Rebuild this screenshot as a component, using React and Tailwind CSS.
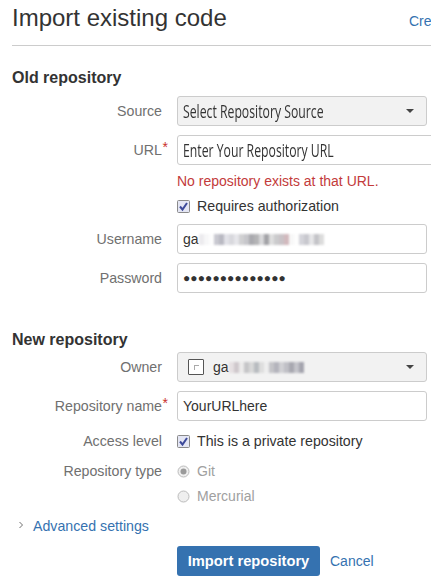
const labelCls = "w-[150px] shrink-0 text-right text-[14.2px] leading-[20px] text-[#707070]";
const inputBox = "h-[30px] rounded-[3px] border border-[#cccccc] flex items-center px-[5px] text-[#333] shrink-0";
const narrow = "inline-block origin-left scale-x-[0.68] whitespace-nowrap font-['Open_Sans',sans-serif] text-[18px]";

function Star() {
  return <span className="absolute -top-[5px] -right-[6px] text-[#c9302c] text-[14px]">*</span>;
}

function Label({ children, star }) {
  return (
    <div className={labelCls}>
      <span className="relative">{children}{star && <Star />}</span>
    </div>
  );
}

function Check() {
  return (
    <svg width="13" height="13" viewBox="0 0 13 13" className="shrink-0">
      <rect x="0.5" y="0.5" width="12" height="12" rx="1" fill="#e4e6f4" stroke="#8a8a8a" />
      <path d="M3 6.5 L5.5 9.5 L10 3" fill="none" stroke="#3d4a9a" strokeWidth="2" />
    </svg>
  );
}

function Radio({ checked }) {
  return (
    <svg width="13" height="13" viewBox="0 0 13 13" className="shrink-0">
      <circle cx="6.5" cy="6.5" r="5.5" fill="#efefef" stroke="#bcbcbc" />
      {checked && <circle cx="6.5" cy="6.5" r="3" fill="#9a9a9a" />}
    </svg>
  );
}

function Caret() {
  return <span className="w-0 h-0 border-x-[4px] border-x-transparent border-t-[4px] border-t-[#444] ml-auto mr-[7px]" />;
}

function Mosaic({ colors }) {
  return (
    <span className="flex items-center blur-[0.8px]">
      {colors.map((c, i) => (
        <span key={i} className="w-[5px] h-[11px]" style={{ backgroundColor: c }} />
      ))}
    </span>
  );
}

const userMosaic = ["#ecebee","#f7f7f8","#fdfdfd","#c8c8d0","#b9b9c2","#e2e2e8","#d8d8dd","#e6e6ea","#d0d0d2","#c6c6ca","#a9a9ae","#b4b4b6","#d8d8da","#a3a3a7","#dedede","#cbcbcd","#c9c2c6","#d2b9bd","#f8f8f8","#fdfdfd","#d4d4da","#c8c8ce","#e6e6e8","#c4c4c8","#dcdcdc"];
const ownerMosaic = ["#e6e0e2","#cfc8cc","#ecebeb","#c6c6c8","#d8d8d8","#b8bcc0","#dedede","#eeeeee","#c4c4c8","#b4b4bc","#d0d0d4","#c0c0c6","#a8a8b0","#c4c4ca","#a4a4ae"];

export default function App() {
  return (
    <div className="w-[431px] h-[585px] overflow-hidden bg-white font-['Liberation_Sans',Arial,sans-serif] text-[14px] text-[#333] pl-[12px]">
      <div className="flex items-start justify-between h-[46px] border-b border-[#cccccc] w-[419px]">
        <h1 className="text-[24px] text-[#333] leading-[36px]">Import existing code</h1>
        <a className="text-[#3572b0] text-[14px] leading-[20px] mt-[11px] shrink-0 -mr-[20px] whitespace-nowrap">Create</a>
      </div>

      <h2 className="font-bold text-[16px] leading-[20px] mt-[22px]">Old repository</h2>

      <div className="flex items-center mt-[8px] gap-[15px]">
        <Label>Source</Label>
        <div className={`${inputBox} w-[250px] bg-[#f2f2f2]`}>
          <span className={narrow}>Select Repository Source</span><Caret />
        </div>
      </div>

      <div className="flex items-center mt-[9px] gap-[15px]">
        <Label star>URL</Label>
        <div className={`${inputBox} w-[270px]`}>
          <span className={narrow}>Enter Your Repository URL</span>
        </div>
      </div>

      <div className="ml-[165px] mt-[8px] text-[#c33b3b] leading-[16px]">No repository exists at that URL.</div>

      <div className="ml-[165px] mt-[9px] flex items-center gap-[7px] leading-[16px] text-[14.2px]"><Check />Requires authorization</div>

      <div className="flex items-center mt-[10px] gap-[15px]">
        <Label>Username</Label>
        <div className={`${inputBox} w-[250px]`}>ga<Mosaic colors={userMosaic} /></div>
      </div>

      <div className="flex items-center mt-[9px] gap-[15px]">
        <Label>Password</Label>
        <div className={`${inputBox} w-[250px] text-[12px] tracking-[0.1px] text-[#333]`}>●●●●●●●●●●●●●●</div>
      </div>

      <h2 className="font-bold text-[16px] leading-[20px] mt-[37px]">New repository</h2>

      <div className="flex items-center mt-[2px] gap-[15px]">
        <Label>Owner</Label>
        <div className={`${inputBox} w-[250px] bg-[#f2f2f2] gap-[9px] pl-[10px]`}>
          <span className="w-[16px] h-[16px] border border-[#555] bg-white rounded-[1px] flex items-center justify-center">
            <span className="w-[5px] h-[5px] border-l border-t border-[#aaa]" />
          </span>
          <span className="flex items-center">ga<Mosaic colors={ownerMosaic} /></span>
          <Caret />
        </div>
      </div>

      <div className="flex items-center mt-[9px] gap-[15px]">
        <Label star>Repository name</Label>
        <div className={`${inputBox} w-[250px]`}>YourURLhere</div>
      </div>

      <div className="flex items-center mt-[10px] gap-[15px] leading-[16px]">
        <Label>Access level</Label>
        <div className="flex items-center gap-[7px] text-[14.2px]"><Check />This is a private repository</div>
      </div>

      <div className="flex items-center mt-[10px] gap-[15px] leading-[16px]">
        <Label>Repository type</Label>
        <div className="flex items-center gap-[7px] text-[#a0a0a0]"><Radio checked />Git</div>
      </div>

      <div className="ml-[165px] mt-[7px] flex items-center gap-[7px] text-[#a0a0a0] leading-[16px]"><Radio />Mercurial</div>

      <div className="flex items-center mt-[14px] leading-[16px]">
        <svg width="6" height="8" viewBox="0 0 6 8" className="ml-[6px] -mt-[2px]"><path d="M1.5 1 L4.5 4 L1.5 7" fill="none" stroke="#707070" /></svg>
        <a className="ml-[9px] text-[#3572b0] text-[14.2px]">Advanced settings</a>
      </div>

      <div className="flex items-center ml-[165px] mt-[12px] gap-[10px]">
        <button className="h-[30px] w-[143px] rounded-[3px] bg-[#3572b0] text-white font-bold text-[14.7px]">Import repository</button>
        <a className="text-[#3572b0]">Cancel</a>
      </div>
    </div>
  );
}
